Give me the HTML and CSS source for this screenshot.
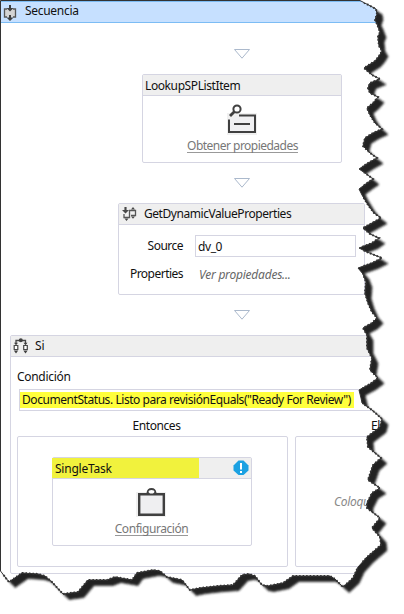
FILE: index.html
```html
<!DOCTYPE html>
<html lang="es">
<head>
<meta charset="utf-8">
<title>Secuencia</title>
<link rel="stylesheet" href="styles.css">
</head>
<body>
<main class="designer">
  <header class="sequence-head">
    <svg class="seq-icon" width="14" height="16" viewBox="0 0 14 16"><path d="M2 4H12V12H2Z" fill="#d4d4d4"/><path d="M4 4H1.500V12H4M10 4H12.500V12H10" fill="none" stroke="#555" stroke-width="1.300"/><path d="M6 0H8V3H10.500L7 6.500 3.500 3H6ZM6 10H8V12.500H10.500L7 16 3.500 12.500H6Z" fill="#404040"/></svg>
    <span class="t-seq">Secuencia</span>
  </header>
  <svg class="arrow first" width="18" height="12" viewBox="0 0 18 12"><path d="M1.500 1.500H16.500L9 10.200Z" fill="#fff" stroke="#abb9cc"/></svg>
  <section class="card lookup">
    <h2 class="card-head"><span class="t-lookup">LookupSPListItem</span></h2>
    <div class="card-body">
      <svg class="action-icon" width="32" height="32" viewBox="0 0 32 32"><path d="M2 9H32V31H2Z" fill="#f0f0f0"/><path d="M14 11.500H30V28H4V15.500" fill="#f0f0f2" stroke="#404040" stroke-width="2"/><path d="M9 20H25" stroke="#404040" stroke-width="2"/><circle cx="12" cy="5" r="3.600" fill="#fff" stroke="#404040" stroke-width="2"/><path d="M9.500 7.500L5 12" stroke="#404040" stroke-width="2.800"/></svg>
      <span class="link t-obtain">Obtener propiedades</span>
    </div>
  </section>
  <svg class="arrow second" width="18" height="12" viewBox="0 0 18 12"><path d="M1.500 1.500H16.500L9 10.200Z" fill="#fff" stroke="#abb9cc"/></svg>
  <section class="card dynamic">
    <h2 class="card-head">
      <svg class="dyn-icon" width="16" height="16" viewBox="0 0 16 16"><path d="M3.500 1V5M2 8V11.500H7.500V4.500H13.500V9.500H9" fill="none" stroke="#555" stroke-width="1.300"/><path d="M2.500 1H4.500V4H7L3.500 7.500 0 4H2.500ZM9 3.500L11 1 13 3.500ZM9 10.500H13L11 12.800ZM2.500 12.500H6.500L4.500 15Z" fill="#484848"/></svg>
      <span class="t-dyn">GetDynamicValueProperties</span>
    </h2>
    <div class="fields">
      <label class="t-source">Source</label><div class="input">dv_0</div>
      <label class="t-props">Properties</label><em class="t-view">Ver propiedades...</em>
    </div>
  </section>
  <svg class="arrow third" width="18" height="12" viewBox="0 0 18 12"><path d="M1.500 1.500H16.500L9 10.200Z" fill="#fff" stroke="#abb9cc"/></svg>
  <section class="card condition">
    <h2 class="card-head">
      <svg class="if-icon" width="16" height="16" viewBox="0 0 16 16"><path d="M3 5V2.500H12.500V5" fill="none" stroke="#484848" stroke-width="1.300"/><circle cx="7.800" cy="2.300" r="2" fill="#404040"/><path d="M1.200 7.500H4.800V11.500H1.200ZM10.700 7.500H14.300V11.500H10.700Z" fill="#fff" stroke="#484848" stroke-width="1.200"/><path d="M1 4.800H5L3 7.200ZM10.500 4.800H14.500L12.500 7.200ZM.8 12.500H5.200L3 15.500ZM10.300 12.500H14.700L12.500 15.500Z" fill="#404040"/></svg>
      <span class="t-if">Si</span>
    </h2>
    <div class="condition-body">
      <label class="t-cond">Condición</label>
      <div class="expression"><mark class="t-expr">DocumentStatus. Listo para revisiónEquals("Ready For Review")</mark></div>
      <div class="branches">
        <div class="branch">
          <h3 class="t-then">Entonces</h3>
          <div class="drop then">
            <section class="card task">
              <h2 class="card-head"><mark class="task-name"><span class="t-task">SingleTask</span></mark>
                <svg class="warn" width="16" height="16" viewBox="0 0 16 16"><path d="M5.500 .5H10.500L15.500 5.500V10.500L10.500 15H5.500L.5 10.500V5.500Z" fill="#1ba1e2"/><path d="M7 3H9V9.500H7ZM7 11H9V13H7Z" fill="#fff"/></svg>
              </h2>
              <div class="card-body">
                <svg class="action-icon" width="32" height="32" viewBox="0 0 32 32"><path d="M1 6H31V31H1Z" fill="#f0f0f0"/><path d="M4.200 8.200H28.800V28.800H4.200Z" fill="#efeff1" stroke="#404040" stroke-width="2.400"/><path d="M9 9V7H11.500C12 3.500 13.500 2 16.500 2S21 3.500 21.500 7H24V9Z" fill="#404040"/><ellipse cx="16.500" cy="5.700" rx="2.900" ry="1.800" fill="#fff"/></svg>
                <span class="link t-config">Configuración</span>
              </div>
            </section>
          </div>
        </div>
        <div class="branch">
          <h3 class="t-else">Else</h3>
          <div class="drop else"><em class="t-drop">Coloque</em></div>
        </div>
      </div>
    </div>
  </section>
  <svg class="tear" width="404" height="614" viewBox="0 0 404 614">
    <defs>
      <path id="sheet" d="M.5 .5H360L376 9 377 14 375 20 377 24 380 32 378 37 379 46 382 51 379 56 375 61 364 68 372 75 380 79 370 83 368 88 370 93 378 97 373 103 367 108 370 115 375 123 382 129 373 133 365 138 363 146 370 153 377 158 368 163 359 169 365 173 373 179 367 183 359 189 362 195 368 205 374 213 381 218 372 223 363 228 370 234 379 238 372 243 359 248 367 252 382 258 372 263 358 268 363 274 366 282 365 293 368 303 372 312 377 318 372 323 363 328 367 335 367 348 372 358 370 370 378 378 370 384 359 390 361 398 362 403 372 410 382 419 380 427 367 437 368 447 381 458 373 465 368 480 380 488 372 493 367 503 367 508 380 518 372 528 380 537 381 545 367 557 358 567 353 578 343 587 335 579 330 576 293 576 283 583 268 586 262 585 255 576 249 574 242 575 233 585 218 586 200 588 190 590 182 580 167 577 160 571 153 570 137 573 132 580 115 577 107 580 88 580 78 592 63 594 52 582 45 576 38 574 22 573 9 582 .5 571Z"/>
      <mask id="outside"><path d="M0 0H404V614H0Z" fill="#fff"/><use href="#sheet" fill="#000"/></mask>
      <clipPath id="edge"><path d="M362 3H404V614H3V568H362Z"/></clipPath>
      <filter id="soft"><feGaussianBlur stdDeviation="1.300"/></filter>
    </defs>
    <g mask="url(#outside)"><path d="M0 0H404V614H0Z" fill="#fff"/><g filter="url(#soft)"><use href="#sheet" x="3" y="3" fill="#222"/><use href="#sheet" x="6" y="5.500" fill="#222" stroke="#222" stroke-width=".8"/></g></g>
    <use href="#sheet" fill="none" stroke="#333"/>
    <g clip-path="url(#edge)"><use href="#sheet" fill="none" stroke="#333" stroke-width="2" stroke-dasharray="1.500 2"/></g>
  </svg>
</main>
</body>
</html>
```
FILE: styles.css
```css
* { box-sizing: border-box; }
body { margin: 0; background: #fff; }
.designer { position: relative; width: 404px; height: 614px; overflow: hidden; padding: 1px 0 0 1px; font: 12px/16px "Noto Sans", "Open Sans", sans-serif; color: #111; }
h2, h3 { margin: 0; font: inherit; }
span, label, em { white-space: nowrap; }
svg { display: block; flex: none; }
.sequence-head { display: flex; height: 22px; padding: 3px 0 0 2px; gap: 8px; border: solid #7cbcf4; border-width: 1px 0; background: #c6e0ff; }
.sequence-head span { margin-top: -2px; }
.arrow { margin-left: 232px; }
.first { margin-top: 25px; }
.second { margin-top: 14px; }
.third { margin-top: 14px; }
.card { border: 1px solid #d5d5e2; border-radius: 2px; background: #fff; }
.card-head { display: flex; height: 21px; background: #efefef; border-bottom: 1px solid #d5d5e2; }
.card-body { display: flex; flex-direction: column; align-items: center; }
.link { color: #777; line-height: 15px; height: 15px; border-bottom: 1px solid #999; }
.lookup { width: 200px; height: 89px; margin: 14px 0 0 141px; }
.lookup .card-head { padding: 3px 0 0 2px; }
.action-icon { margin-top: 8px; margin-right: 2px; }
.lookup .link { margin-top: 2px; margin-left: 1px; }
.dynamic { width: 247px; height: 92px; margin: 14px 0 0 117px; }
.dynamic .card-head { padding: 2px 0 0 3px; gap: 6px; }
.fields { display: grid; grid-template-columns: 64px 161px; column-gap: 12px; row-gap: 6px; padding-top: 10px; }
.fields label { text-align: right; padding-top: 3px; }
.input { height: 22px; padding: 3px 2px 0; border: 1px solid #d5d5e2; letter-spacing: -.4px; }
.fields em { padding: 4px 0 0 4px; color: #666; }
.condition { width: 420px; height: 239px; margin: 14px 0 0 9px; }
.condition .card-head { padding: 2px 0 0 2px; gap: 6px; }
.condition-body { padding: 12px 0 0 6px; display: flex; flex-direction: column; }
.condition-body > label { height: 20px; }
.expression { height: 22px; margin-left: 2px; padding-top: 2px; border: 1px solid #d5d5e2; }
mark { display: block; background: #ffff3c; color: #111; white-space: nowrap; }
.t-expr { width: 334px; height: 16px; padding-left: 2px; }
.branches { display: grid; grid-template-columns: 271px 271px; column-gap: 7px; padding-top: 7px; }
.branch { display: grid; grid-template-rows: 18px 131px; }
.branch h3 { text-align: center; margin-right: -8px; }
.branch:last-child h3 { text-align: left; padding-left: 76px; }
.drop { border: 1px solid #d5d5e2; border-radius: 2px; padding: 20px 34px; }
.task { width: 200px; height: 89px; }
.condition .task .card-head { padding: 0; gap: 0; }
.task-name { width: 147px; height: 20px; flex: none; margin-left: -1px; padding: 3px 0 0 3px; background: #f1f23d; }
.warn { margin: 2px 0 0 34px; }
.task .action-icon { margin-top: 7px; }
.task .link { margin-top: 3px; margin-right: 1px; }
.else { padding: 57px 0 0 38px; color: #888; }
.tear { position: absolute; left: 0; top: 0; }
.t-seq, .t-cond, .t-drop { letter-spacing: -.3px; }
.t-lookup, .t-then, .t-else { letter-spacing: -.4px; }
.t-obtain, .t-source, .t-props { letter-spacing: -.52px; }
.t-dyn, .t-expr, .t-config { letter-spacing: -.44px; }
.t-view, .t-task { letter-spacing: -.22px; }
```
